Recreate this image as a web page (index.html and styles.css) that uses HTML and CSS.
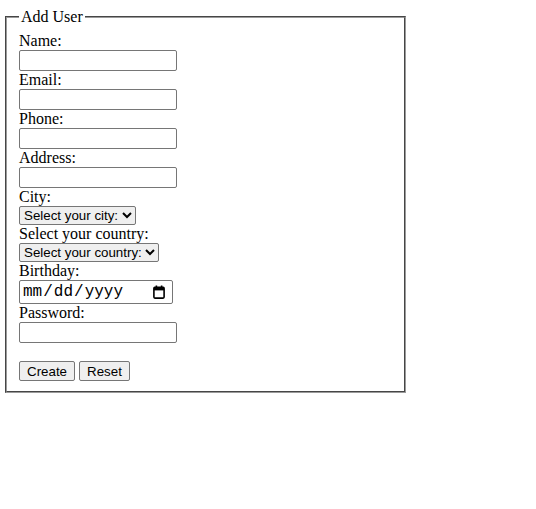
FILE: index.html
```html
<!DOCTYPE html>
<html>
<head>
<meta charset="utf-8">
<link rel="stylesheet" href="styles.css">
</head>
<body>
<form class="user-form">
<fieldset class="box">
<legend>Add User</legend>
<label for="name">Name:</label><br>
<input class="field" type="text" id="name"><br>
<label for="email">Email:</label><br>
<input class="field" type="email" id="email"><br>
<label for="phone">Phone:</label><br>
<input class="field" type="tel" id="phone"><br>
<label for="address">Address:</label><br>
<input class="field" type="text" id="address"><br>
<label for="city">City:</label><br>
<select class="pick" id="city"><option>Select your city:</option></select><br>
<label for="country">Select your country:</label><br>
<select class="pick" id="country"><option>Select your country:</option></select><br>
<label for="bday">Birthday:</label><br>
<span class="date-wrap"><input class="date" type="date" id="bday"><svg class="cal" width="12" height="14" viewBox="0 0 12 14"><rect x="0.9" y="2.4" width="10.2" height="10.7" rx="1" fill="none" stroke="#000" stroke-width="1.6"/><rect x="0.9" y="2.4" width="10.2" height="3" fill="#000"/><rect x="2.6" y="0.5" width="1.6" height="2.5" fill="#000"/><rect x="7.8" y="0.5" width="1.6" height="2.5" fill="#000"/></svg></span><br>
<label for="pw">Password:</label><br>
<input class="field" type="password" id="pw"><br><br>
<button class="btn" type="submit">Create</button>
<button class="btn" type="reset">Reset</button>
</fieldset>
</form>
</body>
</html>
```
FILE: styles.css
```css
body {
  margin: 3px;
  font-family: "Liberation Serif", serif;
}
.box {
  width: 373px;
  margin-top: 5px;
  padding-bottom: 10px;
  border: 2px groove #9a9a9a;
}
.field {
  box-sizing: border-box;
  width: 158px;
  height: 21px;
  border: 1px solid #767676;
  border-radius: 2px;
  margin: 0;
  vertical-align: top;
}
.pick {
  border: 1px solid #767676;
  border-radius: 2px;
  font-family: "Liberation Sans", sans-serif;
}
.date-wrap {
  position: relative;
  display: inline-block;
  vertical-align: top;
}
.date {
  box-sizing: border-box;
  width: 154px;
  height: 24px;
  border: 1px solid #767676;
  border-radius: 2px;
  margin: 0;
  padding: 0 2px;
  font-family: "Liberation Mono", monospace;
  font-size: 16px;
  vertical-align: top;
}
.date::-webkit-calendar-picker-indicator {
  opacity: 0;
}
.cal {
  position: absolute;
  left: 134px;
  top: 5px;
  pointer-events: none;
}
.btn {
  font-family: "Liberation Sans", sans-serif;
  font-size: 13.33px;
  border: 1px solid #767676;
  border-radius: 2px;
  background: #efefef;
  padding: 2px 7px 1px;
}
```
